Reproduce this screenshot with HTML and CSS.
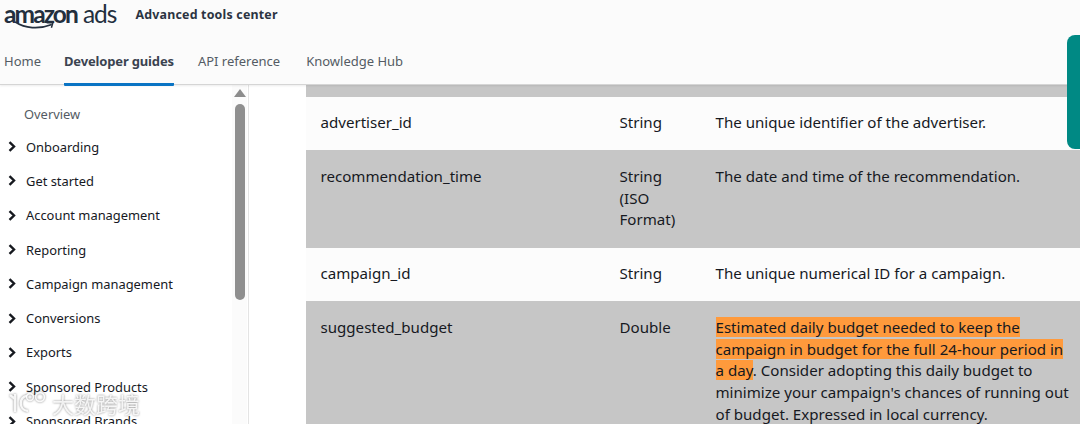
FILE: index.html
```html
<!DOCTYPE html>
<html lang="en">
<head>
<meta charset="utf-8">
<title>Amazon Ads - Advanced tools center</title>
<link rel="stylesheet" href="styles.css">
</head>
<body>
<div class="page">
  <header class="header">
    <div class="brand">
      <div class="logo">
        <span class="logo-amazon">amazon</span><span class="logo-ads">ads</span>
        <svg class="logo-smile" width="40" height="9" viewBox="0 0 50 11" aria-hidden="true">
          <path d="M1 1.5C12 9 30 10.5 45 4.5" fill="none" stroke="#232f3e" stroke-width="2.2" stroke-linecap="round"/>
          <path d="M39.5 2.2L47.5 1.6L45.5 8.4" fill="none" stroke="#232f3e" stroke-width="1.9" stroke-linejoin="round"/>
        </svg>
      </div>
      <div class="brand-title">Advanced tools center</div>
    </div>
    <nav class="nav">
      <a class="nav-item">Home</a>
      <a class="nav-item nav-active">Developer guides</a>
      <a class="nav-item">API reference</a>
      <a class="nav-item nav-last">Knowledge Hub</a>
    </nav>
  </header>
  <div class="body">
    <aside class="sidebar">
      <div class="side-list">
        <div class="side-overview">Overview</div>
        <div class="side-item"><svg class="chev" width="8" height="11" viewBox="0 0 8 11"><path d="M1.5 1.2L6 5.5L1.5 9.8" fill="none" stroke="#16191f" stroke-width="2.4"/></svg>Onboarding</div>
        <div class="side-item"><svg class="chev" width="8" height="11" viewBox="0 0 8 11"><path d="M1.5 1.2L6 5.5L1.5 9.8" fill="none" stroke="#16191f" stroke-width="2.4"/></svg>Get started</div>
        <div class="side-item"><svg class="chev" width="8" height="11" viewBox="0 0 8 11"><path d="M1.5 1.2L6 5.5L1.5 9.8" fill="none" stroke="#16191f" stroke-width="2.4"/></svg>Account management</div>
        <div class="side-item"><svg class="chev" width="8" height="11" viewBox="0 0 8 11"><path d="M1.5 1.2L6 5.5L1.5 9.8" fill="none" stroke="#16191f" stroke-width="2.4"/></svg>Reporting</div>
        <div class="side-item"><svg class="chev" width="8" height="11" viewBox="0 0 8 11"><path d="M1.5 1.2L6 5.5L1.5 9.8" fill="none" stroke="#16191f" stroke-width="2.4"/></svg>Campaign management</div>
        <div class="side-item"><svg class="chev" width="8" height="11" viewBox="0 0 8 11"><path d="M1.5 1.2L6 5.5L1.5 9.8" fill="none" stroke="#16191f" stroke-width="2.4"/></svg>Conversions</div>
        <div class="side-item"><svg class="chev" width="8" height="11" viewBox="0 0 8 11"><path d="M1.5 1.2L6 5.5L1.5 9.8" fill="none" stroke="#16191f" stroke-width="2.4"/></svg>Exports</div>
        <div class="side-item"><svg class="chev" width="8" height="11" viewBox="0 0 8 11"><path d="M1.5 1.2L6 5.5L1.5 9.8" fill="none" stroke="#16191f" stroke-width="2.4"/></svg>Sponsored Products</div>
        <div class="side-item"><svg class="chev" width="8" height="11" viewBox="0 0 8 11"><path d="M1.5 1.2L6 5.5L1.5 9.8" fill="none" stroke="#16191f" stroke-width="2.4"/></svg>Sponsored Brands</div>
      </div>
      <div class="scroll">
        <div class="scroll-up"></div>
        <div class="scroll-thumb"></div>
      </div>
    </aside>
    <main class="content">
      <div class="table">
        <div class="row row-gray row-top"></div>
        <div class="row">
          <div>advertiser_id</div><div>String</div><div>The unique identifier of the advertiser.</div>
        </div>
        <div class="row row-gray">
          <div>recommendation_time</div><div>String (ISO Format)</div><div>The date and time of the recommendation.</div>
        </div>
        <div class="row">
          <div>campaign_id</div><div>String</div><div>The unique numerical ID for a campaign.</div>
        </div>
        <div class="row row-gray">
          <div>suggested_budget</div><div>Double</div><div><mark class="hl">Estimated daily budget needed to keep the campaign in budget for the full 24-hour period in a day</mark>. Consider adopting this daily budget to minimize your campaign's chances of running out of budget. Expressed in local currency.</div>
        </div>
      </div>
    </main>
  </div>
  <div class="side-tab"></div>
  <div class="watermark">
    <svg width="38" height="24" viewBox="0 0 38 24" aria-hidden="true">
      <path d="M2 4L7 8M7 3V21M19 5C11 5 10 19 20 20" fill="none" stroke="#fff" stroke-opacity=".9" stroke-width="2.4"/>
      <circle cx="22" cy="6" r="3.4" fill="none" stroke="#fff" stroke-opacity=".9" stroke-width="1.6"/>
      <circle cx="32" cy="6" r="4.4" fill="none" stroke="#fff" stroke-opacity=".9" stroke-width="1.6"/>
    </svg>
    <span class="watermark-text">大数跨境</span>
  </div>
</div>
</body>
</html>
```
FILE: styles.css
```css
* { box-sizing: border-box; }
html, body { margin: 0; padding: 0; }
body {
  width: 1080px;
  height: 424px;
  overflow: hidden;
  background: #fff;
  font-family: "Noto Sans", "Open Sans", sans-serif;
  color: #16191f;
}
.page { position: relative; width: 1080px; height: 424px; overflow: hidden; }
.header {
  height: 85px;
  background: #fbfbfb;
  border-bottom: 1px solid #d5d5d5;
  box-shadow: 0 1px 2px rgba(0,0,0,.08);
  position: relative;
  z-index: 1;
}
.brand { display: flex; align-items: flex-start; height: 41px; padding-left: 4px; }
.logo { position: relative; width: 131.5px; height: 30px; line-height: 27px; white-space: nowrap; }
.logo-amazon { font-family: "Lato", sans-serif; font-weight: 700; font-size: 24.5px; letter-spacing: -1.9px; color: #232f3e; }
.logo-ads { font-family: "Lato", sans-serif; font-weight: 400; font-size: 24.5px; margin-left: 6px; letter-spacing: -1px; color: #232f3e; }
.logo-smile { position: absolute; left: 11px; top: 21px; }
.brand-title { font-size: 12.4px; font-weight: 700; line-height: 29px; color: #2b3442; letter-spacing: .2px; }
.nav { display: flex; gap: 24px; padding-left: 4px; height: 44px; }
.nav-item { display: block; height: 45px; font-size: 13px; line-height: 41px; color: #545b64; }
.nav-active { margin-left: -1px; font-weight: 700; letter-spacing: -.16px; color: #3a4350; border-bottom: 3px solid #0a74c4; border-radius: 0 0 1px 1px; }
.nav-last { margin-left: 2px; }
.body { display: flex; height: 339px; }
.sidebar { position: relative; flex: none; display: flex; width: 249px; border-right: 1px solid #e4e4e4; overflow: hidden; background: #fff; }
.side-list { flex: 1; padding-top: 19px; font-size: 12.9px; }
.side-overview { padding-left: 24px; height: 20px; line-height: 20px; color: #545b64; }
.side-item { display: flex; align-items: center; gap: 10px; padding-left: 8px; height: 34.3px; color: #16191f; }
.side-overview + .side-item { margin-top: 5.5px; }
.scroll { flex: none; width: 15px; margin-right: 1px; padding-top: 4px; display: flex; flex-direction: column; align-items: center; gap: 7px; background: #fbfbfb; }
.scroll-up { width: 0; height: 0; border-left: 6px solid transparent; border-right: 6px solid transparent; border-bottom: 8px solid #8c8c8c; }
.scroll-thumb { width: 10px; height: 196px; border-radius: 5px; background: #8f8f8f; }
.content { flex: 1; padding-left: 57px; overflow: hidden; }
.table { display: flex; flex-direction: column; font-size: 15.1px; line-height: 21.75px; }
.row { display: grid; grid-template-columns: 299px 96px 375px; padding: 15.5px 0 16.5px; background: #fcfcfc; }
.row > div { padding: 0 14.5px; }
.row > div:last-child { padding-right: 4px; }
.row-gray { background: #c6c6c6; }
.row-top { height: 11.6px; padding: 0; }
.hl { background: #ff9a3c; color: inherit; }
.side-tab { position: absolute; right: 0; top: 35px; width: 13px; height: 114px; background: #008984; border-radius: 8px 0 0 8px; z-index: 2; }
.watermark { position: absolute; left: 8px; top: 390px; display: flex; align-items: center; gap: 6px; z-index: 3; filter: drop-shadow(0 0 1px rgba(90,90,90,.8)); }
.watermark-text { font-family: "Noto Sans CJK SC", sans-serif; font-size: 22px; line-height: 26px; color: rgba(255,255,255,.85); }
```
